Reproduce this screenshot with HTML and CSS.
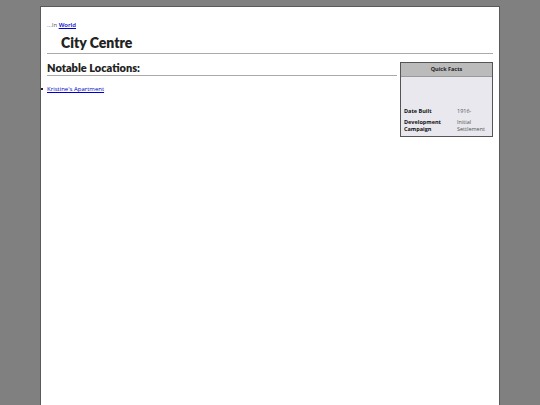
FILE: index.html
```
<!DOCTYPE html>
<html>
<head>
<meta charset="utf-8">
<link rel="stylesheet" href="styles.css">
</head>
<body>
<div class="page">
  <div class="crumb">...In <a href="#">World</a></div>
  <h1 class="title">City Centre</h1>
  <div class="row">
    <div class="main">
      <h2 class="section">Notable Locations:</h2>
      <ul class="list">
        <li><a href="#">Kristine's Apartment</a></li>
      </ul>
    </div>
    <div class="facts">
      <div class="facts-head">Quick Facts</div>
      <div class="facts-body">
        <div class="fact"><span class="label">Date Built</span><span class="value">1916-</span></div>
        <div class="fact"><span class="label">Development Campaign</span><span class="value">Initial Settlement</span></div>
      </div>
    </div>
  </div>
</div>
</body>
</html>
```
FILE: styles.css
```
html, body {
  margin: 0;
  padding: 0;
  height: 100%;
  background: #808080;
}
body {
  font-family: "Open Sans", "Noto Sans", sans-serif;
  color: #222;
}
.page {
  box-sizing: border-box;
  margin: 6px 40px 0 40px;
  min-height: 399px;
  background: #fff;
  border: 1px solid #5a5a5a;
  border-bottom: none;
  padding: 14px 6px 0 6px;
}
.crumb {
  font-size: 6px;
  color: #555;
  line-height: 8px;
}
.crumb a {
  color: #0000cc;
  font-weight: 600;
}
.title {
  margin: 5px 0 0 0;
  padding: 0 0 1px 14px;
  font-family: Lato, sans-serif;
  font-size: 14px;
  line-height: 18px;
  font-weight: 800;
  border-bottom: 1px solid #aaa;
}
.row {
  display: flex;
  align-items: flex-start;
  gap: 3px;
  margin-top: 8px;
}
.main {
  flex: 1;
}
.section {
  margin: 0;
  font-family: Lato, sans-serif;
  font-size: 11px;
  line-height: 12px;
  font-weight: 800;
  border-bottom: 1px solid #aaa;
  padding-bottom: 1px;
}
.list {
  margin: 9px 0 0 0;
  padding: 0;
  list-style: none;
  font-size: 6px;
  line-height: 8px;
}
.list li {
  position: relative;
}
.list li::before {
  content: "";
  position: absolute;
  left: -6px;
  top: 3px;
  width: 2px;
  height: 2px;
  background: #222;
}
.list a {
  color: #0000cc;
}
.facts {
  width: 91px;
  border: 1px solid #555;
  background: #e8e8ee;
  font-size: 5.5px;
}
.facts-head {
  background: #bbb;
  text-align: center;
  font-weight: 700;
  line-height: 13px;
  border-bottom: 1px solid #999;
}
.facts-body {
  padding: 31px 3px 3px 3px;
  display: flex;
  flex-direction: column;
  gap: 4px;
}
.fact {
  display: flex;
  line-height: 7px;
}
.label {
  width: 53px;
  font-weight: 700;
  color: #111;
}
.value {
  flex: 1;
  color: #555;
}
```
